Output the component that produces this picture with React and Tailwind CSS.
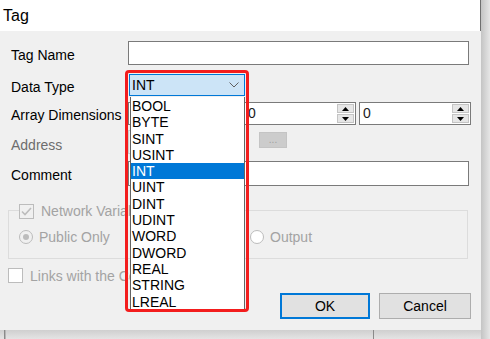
const types = ["BOOL", "BYTE", "SINT", "USINT", "INT", "UINT", "DINT", "UDINT", "WORD", "DWORD", "REAL", "STRING", "LREAL"];

function Arrow({ up }) {
  return (
    <svg width="7" height="4" viewBox="0 0 7 4">
      <path d={up ? "M0 4 L3.5 0 L7 4 Z" : "M0 0 L3.5 4 L7 0 Z"} fill="#000" />
    </svg>
  );
}

function Spinner({ className }) {
  return (
    <div className={"flex h-[23px] border border-[#7a7a7a] bg-white " + className}>
      <div className="flex-1 pl-[3px] text-[14px] leading-[21px] text-[#1b1b1b]">0</div>
      <div className="flex w-[18px] flex-col gap-px py-px pr-px">
        <div className="flex flex-1 items-center justify-center border border-[#c4c4c4] bg-[#e6e6e6]">
          <Arrow up />
        </div>
        <div className="flex flex-1 items-center justify-center border border-[#c4c4c4] bg-[#e6e6e6]">
          <Arrow />
        </div>
      </div>
    </div>
  );
}

function Label({ children, muted, className = "pt-[3px]" }) {
  return (
    <div className={"ml-[3px] w-[117px] text-[14px] leading-[16px] " + className + " " + (muted ? "text-[#6d6d6d]" : "text-black")}>
      {children}
    </div>
  );
}

export default function App() {
  return (
    <div className="flex h-[339px] w-[490px] overflow-hidden bg-[#e2e2e2]" style={{ fontFamily: '"Liberation Sans", Arial, sans-serif' }}>
      <div className="flex w-[481px] flex-col">
        <div className="flex h-[330px] flex-col">
          {/* title */}
          <div className="flex h-[31px] items-center border-r border-[#707070] bg-white pl-[3px] text-[16px] text-black">Tag</div>

          {/* body */}
          <div className="relative flex flex-1 flex-col bg-[#f0f0f0] pl-[8px] pt-[10px]">
            <div className="flex h-[24px] items-center">
              <Label>Tag Name</Label>
              <div className="h-[24px] w-[341px] border border-[#7a7a7a] bg-white" />
            </div>

            <div className="mt-[9px] flex h-[22px] items-center">
              <Label>Data Type</Label>
              <div className="relative ml-px h-[22px] w-[116px]">
                <div className="flex h-[22px] items-center justify-between border border-[#0078d7] bg-[#cce4f7] pl-[2px] pr-[5px] text-[14px] text-black">
                  <span>INT</span>
                  <svg width="10" height="6" viewBox="0 0 10 6">
                    <path d="M0.5 0.5 L5 5 L9.5 0.5" fill="none" stroke="#606060" strokeWidth="1" />
                  </svg>
                </div>
                {/* open drop-down list */}
                <div className="absolute left-px top-[23px] z-10 flex w-[115px] flex-col border-x border-b border-[#646464] bg-white pt-px">
                  {types.map((t) => (
                    <div
                      key={t}
                      className={"h-[16.3px] pl-[1px] text-[14px] leading-[16.3px] " + (t === "INT" ? "bg-[#0078d7] text-white" : "text-black")}
                    >
                      {t}
                    </div>
                  ))}
                </div>
                {/* red highlight frame */}
                <div className="pointer-events-none absolute left-[-4px] top-[-4px] z-20 h-[242px] w-[124px] rounded-[4px] border-[3px] border-[#f31d1d]" />
              </div>
            </div>

            <div className="mt-[6px] flex h-[23px] items-center">
              <Label>Array Dimensions</Label>
              <div className="flex gap-[3px]">
                <Spinner className="w-[113px]" />
                <Spinner className="w-[112px]" />
                <Spinner className="w-[112px]" />
              </div>
            </div>

            <div className="mt-[5px] flex h-[24px] items-center">
              <Label muted className="pt-[6px]">Address</Label>
              <div className="h-[24px] w-[116px] border border-[#cccccc] bg-[#f0f0f0]" />
              <div className="mb-[4px] ml-[15px] flex h-[16px] w-[28px] items-center justify-center border border-[#c4c4c4] bg-[#cccccc] text-[10px] leading-none text-[#a0a0a0]">
                ...
              </div>
            </div>

            <div className="mt-[7px] flex h-[25px] items-center">
              <Label>Comment</Label>
              <div className="h-[25px] w-[341px] border border-[#7a7a7a] bg-white" />
            </div>

            {/* network variable group */}
            <div className="relative mt-[24px] h-[49px] w-[460px] border border-[#dcdcdc]">
              <div className="absolute left-[10px] top-[-8px] flex items-center gap-[7px] bg-[#f0f0f0] pr-[2px]">
                <div className="flex h-[15px] w-[15px] items-center justify-center border border-[#bcbcbc] bg-[#f0f0f0]">
                  <svg width="11" height="9" viewBox="0 0 11 9">
                    <path d="M1 4.5 L4 7.5 L10 1" fill="none" stroke="#bcbcbc" strokeWidth="1.6" />
                  </svg>
                </div>
                <span className="text-[14px] leading-[16px] text-[#a3a3a3]">Network Variable</span>
              </div>
              <div className="flex h-full items-center pl-[10px] pt-[5px]">
                <div className="flex w-[231px] items-center gap-[6px]">
                  <div className="flex h-[14px] w-[14px] items-center justify-center rounded-full border border-[#bcbcbc] bg-[#f0f0f0]">
                    <div className="h-[6px] w-[6px] rounded-full bg-[#bcbcbc]" />
                  </div>
                  <span className="text-[14px] leading-[16px] text-[#a3a3a3]">Public Only</span>
                </div>
                <div className="flex items-center gap-[6px]">
                  <div className="h-[14px] w-[14px] rounded-full border border-[#bcbcbc] bg-white" />
                  <span className="text-[14px] leading-[16px] text-[#a3a3a3]">Output</span>
                </div>
              </div>
            </div>

            <div className="mt-[9px] flex h-[15px] items-center gap-[7px]">
              <div className="h-[15px] w-[15px] border border-[#bcbcbc] bg-white" />
              <span className="text-[14px] leading-[16px] text-[#a3a3a3]">Links with the Controller</span>
            </div>

            <div className="mt-[10px] flex gap-[9px] pl-[272px]">
              <div className="flex h-[26px] w-[90px] items-center justify-center border-2 border-[#0078d7] bg-[#e1e1e1] text-[14px] text-black">OK</div>
              <div className="flex h-[26px] w-[92px] items-center justify-center border border-[#adadad] bg-[#e1e1e1] text-[14px] text-black">Cancel</div>
            </div>
          </div>
        </div>

        {/* window behind the dialog */}
        <div className="flex flex-1 bg-gradient-to-b from-[#cfcfcf] to-[#e4e4e4]">
          <div className="ml-[4px] w-px bg-[#8a8a8a]" />
          <div className="w-px bg-[#b5b5b5]" />
          <div className="ml-[367px] w-px bg-[#8a8a8a]" />
        </div>
      </div>
      <div className="w-[9px] bg-gradient-to-r from-[#c4c4c4] to-[#e6e6e6]" />
    </div>
  );
}
